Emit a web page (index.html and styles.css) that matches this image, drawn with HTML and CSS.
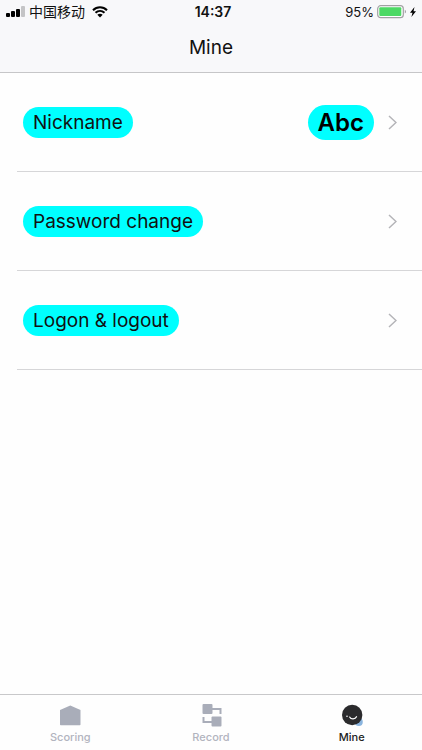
FILE: index.html
```html
<!DOCTYPE html>
<html lang="en">
<head>
  <meta charset="UTF-8" />
  <meta name="viewport" content="width=device-width, initial-scale=1.0"/>
  <title>Mine</title>
  <link rel="stylesheet" href="styles.css">
</head>
<body>
  <div class="app">
    <header class="header">
      <div class="status-bar">
        <div class="status-left">
          <svg class="signal" width="19" height="12" viewBox="0 0 19 12">
            <rect x="0" y="7" width="4" height="4" rx="1" fill="#000"/>
            <rect x="5" y="5" width="4" height="6" rx="1" fill="#000"/>
            <rect x="10" y="3" width="4" height="8" rx="1" fill="#000"/>
            <rect x="15" y="0" width="4" height="11" rx="1" fill="#c4c4c6"/>
          </svg>
          <span class="carrier" lang="zh">中国移动</span>
          <svg class="wifi" width="16" height="12" viewBox="0 0 16 12">
            <path d="M1 4.200C5 .2 11 .2 15 4.200M3.500 6.800C6.100 4.300 9.900 4.300 12.500 6.800" fill="none" stroke="#000" stroke-width="2"/>
            <path d="M5.300 8.700C6.900 7.300 9.100 7.300 10.700 8.700L8 11.500z" fill="#000"/>
          </svg>
        </div>
        <span class="time">14:37</span>
        <div class="status-right">
          <span class="percent">95%</span>
          <svg class="battery" width="30" height="14" viewBox="0 0 30 14">
            <rect x=".7" y=".7" width="25.600" height="12" rx="3" fill="#fff" stroke="#a0a0a2" stroke-width="1.200"/>
            <rect x="2.300" y="2.300" width="22" height="8.800" rx="1" fill="#4cd964"/>
            <path d="M27.800 4.800c1.400.7 1.400 3.100 0 3.800z" fill="#8e8e93"/>
          </svg>
          <svg class="bolt" width="6" height="10" viewBox="0 0 6 10">
            <path d="M4.500 0L0 5.700h2.500L1.400 10 6 4.200H3.500z" fill="#000"/>
          </svg>
        </div>
      </div>
      <h1 class="title">Mine</h1>
    </header>

    <main class="list">
      <a class="row" href="#nickname">
        <span class="tag">Nickname</span>
        <span class="tag value">Abc</span>
        <svg class="arrow" width="9" height="15" viewBox="0 0 9 15"><path d="M1 1l7 6.500L1 14"/></svg>
      </a>
      <a class="row" href="#password">
        <span class="tag">Password change</span>
        <svg class="arrow" width="9" height="15" viewBox="0 0 9 15"><path d="M1 1l7 6.500L1 14"/></svg>
      </a>
      <a class="row" href="#logon">
        <span class="tag">Logon &amp; logout</span>
        <svg class="arrow" width="9" height="15" viewBox="0 0 9 15"><path d="M1 1l7 6.500L1 14"/></svg>
      </a>
    </main>

    <nav class="tab-bar">
      <a class="tab" href="#scoring">
        <svg width="24" height="24" viewBox="0 0 24 24">
          <path d="M12.300 2.500L22.500 7v14.500q0 .7-.7.700H2.700q-.7 0-.7-.7V7z" fill="#a9adb9"/>
        </svg>
        <span>Scoring</span>
      </a>
      <a class="tab" href="#record">
        <svg width="24" height="24" viewBox="0 0 24 24">
          <g fill="#a9adb9">
            <rect x="3.500" y="1" width="10" height="10" rx="1"/>
            <rect x="12.500" y="13.500" width="10" height="10" rx="1"/>
          </g>
          <path d="M13 6h8.500v5M4.500 14v5h8.500" fill="none" stroke="#a9adb9" stroke-width="2"/>
        </svg>
        <span>Record</span>
      </a>
      <a class="tab active" href="#mine">
        <svg width="24" height="24" viewBox="0 0 24 24">
          <circle cx="18.800" cy="19" r="4" fill="#8ab4de"/>
          <circle cx="12.200" cy="12" r="10.200" fill="#2b2b2d"/>
          <circle cx="7" cy="13.300" r=".8" fill="#fff"/>
          <path d="M9.800 14.200c1.200 2.300 5.400 2.200 6.700-.4" fill="none" stroke="#fff" stroke-width="1.300" stroke-linecap="round"/>
        </svg>
        <span>Mine</span>
      </a>
    </nav>
  </div>
</body>
</html>
```

FILE: styles.css
```css
* {
  box-sizing: border-box;
}
body {
  margin: 0;
  font-family: Inter, "Noto Sans CJK SC", sans-serif;
  background: #fefefe;
  color: #111;
}
a {
  color: inherit;
  text-decoration: none;
}
svg {
  display: block;
  flex: none;
}
.app {
  display: flex;
  flex-direction: column;
  min-height: 100vh;
}

/* status bar + title */
.header {
  background: #f8f8fa;
  border-bottom: 1px solid #c6c6c8;
}
.status-bar {
  display: grid;
  grid-template-columns: 1fr auto 1fr;
  align-items: center;
  height: 24px;
  padding: 0 6px;
  font-size: 14px;
  line-height: 20px;
}
.status-left,
.status-right {
  display: flex;
  align-items: center;
}
.status-right {
  justify-content: flex-end;
}
.carrier {
  margin: 0 7px 0 4px;
}
.time {
  padding-left: 4px;
  font-weight: 600;
}
.percent {
  font-size: 13px;
}
.battery {
  margin: 0 3px;
}
.title {
  margin: 0;
  padding: 10px 0;
  font-size: 19px;
  line-height: 28px;
  font-weight: 400;
  text-align: center;
}

/* settings list */
.list {
  flex: 1;
}
.row {
  display: flex;
  align-items: center;
  height: 99px;
  margin-left: 17px;
  padding: 0 25px 0 6px;
  border-bottom: 1px solid #d6d6d8;
}
.tag {
  padding: 0 10px;
  border-radius: 18px;
  background: #00ffff;
  font-size: 19px;
  line-height: 31px;
}
.value {
  margin-left: auto;
  font-size: 24px;
  line-height: 35px;
  font-weight: 600;
  color: #000;
}
.arrow {
  margin-left: auto;
  fill: none;
  stroke: #b4b4b8;
  stroke-width: 1.5;
}
.value + .arrow {
  margin-left: 14px;
}

/* bottom tabs */
.tab-bar {
  display: flex;
  height: 56px;
  border-top: 1px solid #c8c8ca;
}
.tab {
  flex: 1;
  display: flex;
  flex-direction: column;
  align-items: center;
  gap: 3px;
  padding-top: 8px;
  font-size: 11px;
  line-height: 14px;
  font-weight: 500;
  color: #b2b4be;
}
.active {
  color: #222;
}
```
